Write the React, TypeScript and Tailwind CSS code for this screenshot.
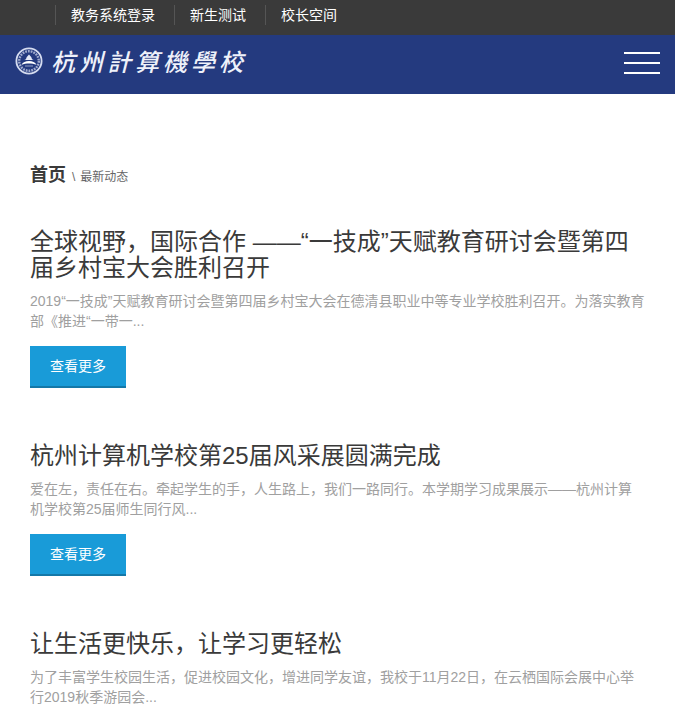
const topLinks = ["教务系统登录", "新生测试", "校长空间"];

const schoolName = "杭州計算機學校";

const articles = [
  {
    title: "全球视野，国际合作 ——“一技成”天赋教育研讨会暨第四届乡村宝大会胜利召开",
    summary:
      "2019“一技成”天赋教育研讨会暨第四届乡村宝大会在德清县职业中等专业学校胜利召开。为落实教育部《推进“一带一...",
    link: "#news-1",
  },
  {
    title: "杭州计算机学校第25届风采展圆满完成",
    summary:
      "爱在左，责任在右。牵起学生的手，人生路上，我们一路同行。本学期学习成果展示——杭州计算机学校第25届师生同行风...",
    link: "#news-2",
  },
  {
    title: "让生活更快乐，让学习更轻松",
    summary:
      "为了丰富学生校园生活，促进校园文化，增进同学友谊，我校于11月22日，在云栖国际会展中心举行2019秋季游园会...",
  },
];

export default function App() {
  return (
    <div className="bg-white font-['Liberation_Sans','Noto_Sans_CJK_SC',sans-serif] text-sm text-[#3a3a3a]">
      <TopBar />
      <Header />
      <main className="px-[30px] pt-[68px] pb-2">
        <Breadcrumb />
        <div className="mt-[38px] flex flex-col gap-[55px]">
          {articles.map((article) => (
            <Article key={article.title} {...article} />
          ))}
        </div>
      </main>
    </div>
  );
}

function TopBar() {
  return (
    <div className="bg-[#3a3a3a] pt-[5px] pb-[10px] pl-[55px]">
      <ul className="flex gap-1">
        {topLinks.map((label) => (
          <li key={label} className="border-l border-[#555555] px-[15px] leading-5">
            <a href="#" className="block text-white hover:underline">
              {label}
            </a>
          </li>
        ))}
      </ul>
    </div>
  );
}

function Header() {
  return (
    <header className="flex h-[59px] items-center justify-between bg-[#243a7f] px-[15px] pb-1">
      <a href="#" className="mb-1 flex items-center gap-2 text-[#eef1fa]">
        <Emblem />
        <span lang="zh-Hant" className="flex gap-1 font-['Noto_Sans_CJK_TC',sans-serif] text-2xl leading-7 font-medium italic">
          {[...schoolName].map((char) => (
            <span key={char}>{char}</span>
          ))}
        </span>
      </a>
      <button type="button" aria-label="菜单" className="flex w-9 flex-col gap-2">
        <span className="h-0.5 w-full bg-white" />
        <span className="h-0.5 w-full bg-white" />
        <span className="h-0.5 w-full bg-white" />
      </button>
    </header>
  );
}

// School seal: outer ring, dotted lettering band and the roof shape in the middle
function Emblem() {
  return (
    <svg viewBox="0 0 28 28" className="size-7 shrink-0" fill="none" stroke="#d5dcf0" aria-hidden="true">
      <circle cx="14" cy="14" r="12.6" strokeWidth="1.8" />
      <circle cx="14" cy="14" r="9.8" strokeWidth="2.4" strokeDasharray="1.8 1" opacity="0.7" />
      <path d="M14 7.5l2.2 2.6c.5.7.2 1.500 1 2.100.4.400 1 .6 1.600.8H9.200c.6-.2 1.200-.4 1.600-.8.8-.6.5-1.400 1-2.100z" fill="#e4e9f6" stroke="none" />
      <path d="M6.500 17.800c1.400-2.600 4-3.800 7.500-3.800s6.100 1.200 7.500 3.800c-2.300-.9-4.800-1.200-7.500-1.200s-5.200.3-7.500 1.200z" fill="#ffffff" stroke="none" />
      <path d="M10 19h8" strokeWidth="0.8" opacity="0.8" />
    </svg>
  );
}

function Breadcrumb() {
  return (
    <nav aria-label="breadcrumb" className="flex items-baseline text-xs leading-[27px] text-[#666666]">
      <a href="#" className="mr-1.5 text-lg leading-[27px] font-bold text-[#3a3a3a]">
        首页
      </a>
      <span className="mr-[5px]">\</span>
      <span>最新动态</span>
    </nav>
  );
}

function Article({ title, summary, link }: { title: string; summary: string; link?: string }) {
  return (
    <article>
      <h2 className="text-2xl leading-[26px]">{title}</h2>
      <p className="mt-[10px] leading-5 text-[#a0a0a0]">{summary}</p>
      {link && (
        <a
          href={link}
          className="mt-[15px] inline-block border-b-2 border-[#1478a8] bg-[#199bd8] px-5 py-[10px] align-top leading-5 text-white hover:bg-[#1478a8]"
        >
          查看更多
        </a>
      )}
    </article>
  );
}
